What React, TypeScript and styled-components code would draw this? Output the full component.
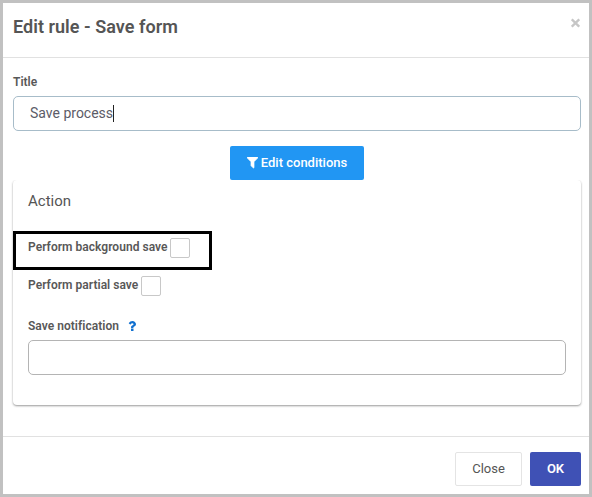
import React from "react";
import styled, { createGlobalStyle } from "styled-components";

const GlobalStyle = createGlobalStyle`
  * { box-sizing: border-box; }
  body { margin: 0; font-family: Roboto, sans-serif; color: #555; }
`;

const Dialog = styled.div`
  width: 592px;
  height: 497px;
  border: 3px solid #c1c1c1;
  background: #fff;
  display: flex;
  flex-direction: column;
  overflow: hidden;
`;

const Header = styled.header`
  height: 55px;
  border-bottom: 1px solid #e1e1e1;
  padding: 0 8px 0 10px;
  display: flex;
  justify-content: space-between;
`;

const Heading = styled.h1`
  margin: 13px 0 0;
  font-size: 18px;
  line-height: 22px;
  font-weight: 600;
  letter-spacing: 0.04px;
  color: #555;
`;

const CloseIcon = styled.button`
  margin: 15px 1px 0 0;
  padding: 0;
  height: 10px;
  border: 0;
  background: none;
  display: flex;
`;

const Body = styled.main`
  flex: 1;
  padding: 15px 8px 0 10px;
  display: flex;
  flex-direction: column;
`;

const Label = styled.label`
  display: block;
  font-size: 12px;
  line-height: 18px;
  font-weight: 600;
  letter-spacing: 0.03px;
  color: #585858;
`;

const Field = styled.div<{ $active?: boolean }>`
  height: 35px;
  flex-shrink: 0;
  border: 1px solid ${(p) => (p.$active ? "#a7bcc9" : "#b4b4b4")};
  border-radius: 5px;
  padding: 0 16px 2px;
  display: flex;
  align-items: center;
  font-size: 14px;
  line-height: 18px;
  color: #5c5c68;
`;

const Caret = styled.span`
  width: 1px;
  height: 17px;
  margin-top: 2px;
  background: #222;
`;

const TitleField = styled(Field)`
  margin-top: 5px;
`;

const Button = styled.button<{ $kind: "info" | "plain" | "primary" }>`
  height: 34px;
  width: ${(p) => ({ info: 134, plain: 67, primary: 51 })[p.$kind]}px;
  padding: 0;
  border: ${(p) => (p.$kind === "plain" ? "1px solid #e4e4e4" : "0")};
  border-radius: 2px;
  background: ${(p) => ({ info: "#2196f3", plain: "#fff", primary: "#3f51b5" })[p.$kind]};
  color: ${(p) => (p.$kind === "plain" ? "#555" : "#fff")};
  font: ${(p) => ({ info: 500, plain: 400, primary: 600 })[p.$kind]} 13px/18px Roboto, sans-serif;
  display: flex;
  align-items: center;
  justify-content: center;
  gap: 3px;
`;

const Conditions = styled.div`
  margin-top: 15px;
  display: flex;
  justify-content: center;
`;

const Card = styled.section`
  height: 225px;
  border-radius: 4px;
  box-shadow: 0 1px 2px rgba(0, 0, 0, 0.34), 0 1px 3px rgba(0, 0, 0, 0.08);
  clip-path: inset(0 -4px -5px -4px);
  display: flex;
  flex-direction: column;
`;

const CardTitle = styled.h2`
  margin: 11px 15px 0;
  font-size: 15px;
  line-height: 20px;
  font-weight: 400;
  color: #555;
`;

const CheckRow = styled.div<{ $marked?: boolean }>`
  display: flex;
  gap: 3px;
  align-items: flex-start;
  align-self: flex-start;
  ${(p) =>
    p.$marked
      ? "width: 199px; height: 39px; margin-top: 20px; border: 3px solid #000; padding: 4px 12px 0;"
      : "height: 20px; margin-top: 6px; padding: 0 15px;"}
`;

const Checkbox = styled.span`
  width: 20px;
  height: 20px;
  border: 1px solid #c8c8c8;
  border-radius: 2px;
`;

const Notification = styled.div`
  margin: 21px 15px 0;
`;

const LabelLine = styled.div`
  display: flex;
  gap: 9px;
  align-items: center;
  margin-bottom: 5px;
`;

const Footer = styled.footer`
  height: 58px;
  border-top: 1px solid #e1e1e1;
  padding: 15px 8px 0;
  display: flex;
  justify-content: flex-end;
  gap: 8px;
`;

const CrossIcon = () => (
  <svg width="9" height="10" viewBox="0 0 9 10" fill="none" stroke="#c6c6c6" strokeWidth="2.3">
    <path d="M0.8 1.3l7.4 7.4M8.2 1.3L0.8 8.7" />
  </svg>
);

const FilterIcon = () => (
  <svg width="11" height="12" viewBox="192 256 1408 1536" fill="#fff" stroke="#fff" strokeWidth="90">
    <path d="M1595 295q17 41-14 70l-493 493v742q0 42-39 59-13 5-25 5-27 0-45-19l-256-256q-19-19-19-45v-486l-493-493q-31-29-14-70 17-39 59-39h1280q42 0 59 39z" />
  </svg>
);

const HelpIcon = () => (
  <svg width="8" height="10" viewBox="380 250 1030 1290" fill="#1070d0">
    <path d="M1088 1256v240q0 16-12 28t-28 12h-240q-16 0-28-12t-12-28v-240q0-16 12-28t28-12h240q16 0 28 12t12 28zm316-600q0 54-15.5 101t-35 76.5-55 59.5-57.5 43.5-61 35.5q-41 23-68.5 65t-27.5 67q0 17-12 32.5t-28 15.5h-240q-15 0-25.5-18.5t-10.5-37.5v-45q0-83 65-156.5t143-108.5q59-27 84-56t25-76q0-42-46.5-74t-107.5-32q-65 0-108 29-35 25-107 115-13 16-31 16-12 0-25-8l-164-125q-13-10-15.5-25t5.5-28q160-266 464-266 80 0 161 31t146 83 106 127.5 41 158.5z" />
  </svg>
);

export default function App() {
  return (
    <>
      <GlobalStyle />
      <Dialog>
        <Header>
          <Heading>Edit rule - Save form</Heading>
          <CloseIcon aria-label="Close">
            <CrossIcon />
          </CloseIcon>
        </Header>
        <Body>
          <Label>Title</Label>
          <TitleField $active>
            <span>Save process</span>
            <Caret />
          </TitleField>
          <Conditions>
            <Button $kind="info">
              <FilterIcon />
              <span>Edit conditions</span>
            </Button>
          </Conditions>
          <Card>
            <CardTitle>Action</CardTitle>
            <CheckRow $marked>
              <Label>Perform background save</Label>
              <Checkbox />
            </CheckRow>
            <CheckRow>
              <Label>Perform partial save</Label>
              <Checkbox />
            </CheckRow>
            <Notification>
              <LabelLine>
                <Label>Save notification</Label>
                <HelpIcon />
              </LabelLine>
              <Field />
            </Notification>
          </Card>
        </Body>
        <Footer>
          <Button $kind="plain">Close</Button>
          <Button $kind="primary">OK</Button>
        </Footer>
      </Dialog>
    </>
  );
}
